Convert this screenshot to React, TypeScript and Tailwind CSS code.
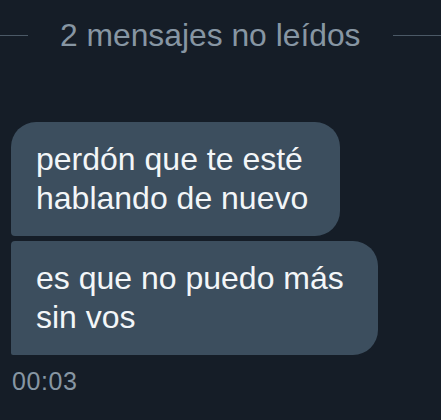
import React from "react";

const font = { fontFamily: '"Liberation Sans", Arial, sans-serif' };

export default function App() {
  return (
    <div
      className="w-[441px] h-[420px] bg-[#151d27] overflow-hidden"
      style={font}
    >
      {/* Unread divider */}
      <div className="flex items-center pt-[15px]">
        <div className="w-[28px] h-px bg-[#4b5966]" />
        <span className="mx-[32px] text-[31.8px] leading-[40px] text-[#8796a3] whitespace-nowrap">
          2 mensajes no leídos
        </span>
        <div className="flex-1 h-px bg-[#4b5966]" />
      </div>

      {/* Messages */}
      <div className="mt-[67px] pl-[11px] flex flex-col gap-[5px]">
        <div className="w-[329px] bg-[#3c4e5e] rounded-tl-[25px] rounded-tr-[25px] rounded-br-[25px] rounded-bl-[4px] pl-[25px] py-[18px] text-[32px] leading-[39px] text-[#f3f6f8]">
          perdón que te esté
          <br />
          hablando de nuevo
        </div>
        <div className="w-[367px] bg-[#3c4e5e] rounded-tl-[4px] rounded-tr-[25px] rounded-br-[25px] rounded-bl-[2px] pl-[25px] py-[18px] text-[32px] leading-[39px] text-[#f3f6f8]">
          es que no puedo más
          <br />
          sin vos
        </div>
      </div>

      <div className="mt-[12px] pl-[12px] text-[25px] leading-[28px] tracking-[0.6px] text-[#8796a3]">
        00:03
      </div>
    </div>
  );
}
